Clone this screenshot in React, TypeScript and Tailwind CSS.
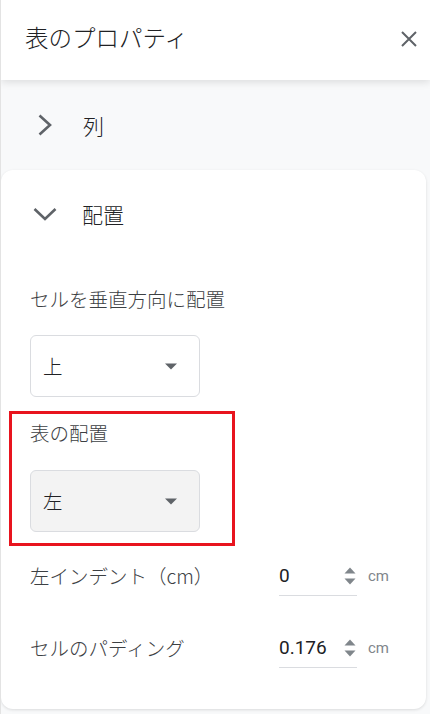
const jp = { fontFamily: '"Noto Sans CJK JP", "Noto Sans", sans-serif' };
const num = { fontFamily: 'Roboto, "Noto Sans CJK JP", sans-serif' };

function Caret() {
  return (
    <svg width="12" height="7" viewBox="0 0 12 7" className="shrink-0">
      <path d="M0 0.5 L12 0.5 L6 6.5 Z" fill="#5f6368" />
    </svg>
  );
}

function Spinner() {
  return (
    <svg width="12" height="18" viewBox="0 0 12 18" className="shrink-0">
      <path d="M0.5 6.5 L6 0.5 L11.5 6.5 Z" fill="#80868b" />
      <path d="M0.5 11.5 L6 17.5 L11.5 11.5 Z" fill="#80868b" />
    </svg>
  );
}

function Select({ value, filled }: { value: string; filled?: boolean }) {
  return (
    <div
      className={`flex items-center justify-between w-[170px] h-[62px] rounded-md border border-[#dadce0] pl-[12px] pr-[22px] ${
        filled ? "bg-[#f3f3f3]" : "bg-white"
      }`}
    >
      <span className="text-[19.5px] leading-[28px] font-light text-[#202124]" style={jp}>
        {value}
      </span>
      <Caret />
    </div>
  );
}

function NumberRow({ label, value, className = "" }: { label: string; value: string; className?: string }) {
  return (
    <div className={`flex items-start ${className}`}>
      <div className="w-[249px] text-[19.5px] leading-[28px] font-light text-[#3c4043]" style={jp}>
        {label}
      </div>
      <div className="flex items-start w-[78px] h-[34px] border-b border-[#dadce0]">
        <span className="flex-1 text-[19px] leading-[28px] text-[#202124]" style={num}>
          {value}
        </span>
        <div className="mt-[5px] mr-[1px]">
          <Spinner />
        </div>
      </div>
      <span className="ml-[11px] text-[15px] leading-[28px] text-[#80868b]" style={num}>
        cm
      </span>
    </div>
  );
}

export default function App() {
  return (
    <div className="w-[430px] h-[714px] overflow-hidden bg-[#f8f9fa] border-l border-[#e3e3e3] flex flex-col">
      <div className="relative z-10 h-[80px] shrink-0 bg-white shadow-[0_2px_8px_rgba(0,0,0,0.12)] flex items-start justify-between pl-[24px] pr-[12px]">
        <h1 className="mt-[21px] text-[23.5px] leading-[32px] font-light text-[#202124]" style={jp}>
          表のプロパティ
        </h1>
        <svg width="18" height="18" viewBox="0 0 18 18" className="mt-[30px]">
          <path d="M2 2 L16 16 M16 2 L2 16" stroke="#5f6368" strokeWidth="2" />
        </svg>
      </div>

      <div className="h-[90px] shrink-0 flex items-center pl-[36px]">
        <svg width="16" height="26" viewBox="0 0 16 26" className="shrink-0">
          <path d="M2.5 3.5 L13 13 L2.5 22.5" fill="none" stroke="#5f6368" strokeWidth="2.6" />
        </svg>
        <span className="ml-[30px] text-[21px] leading-[28px] font-light text-[#202124]" style={jp}>
          列
        </span>
      </div>

      <div className="mr-[4px] bg-white rounded-xl shadow-[0_1px_3px_rgba(0,0,0,0.12)] px-[29px] pb-[41px]">
        <div className="h-[88px] flex items-center ml-[2px]">
          <svg width="26" height="16" viewBox="0 0 26 16" className="shrink-0">
            <path d="M2.5 3 L13 13 L23.5 3" fill="none" stroke="#5f6368" strokeWidth="2.6" />
          </svg>
          <span className="ml-[24px] text-[21px] leading-[28px] font-light text-[#202124]" style={jp}>
            配置
          </span>
        </div>

        <div className="mt-[27px] text-[19.5px] leading-[28px] font-light text-[#3c4043]" style={jp}>
          セルを垂直方向に配置
        </div>
        <div className="mt-[22px]">
          <Select value="上" />
        </div>

        <div className="mt-[14px] -ml-[21px] w-[226px] border-[3px] border-[#e8141e] pl-[18px] pt-[5px] pb-[11px]">
          <div className="text-[19.5px] leading-[28px] font-light text-[#3c4043]" style={jp}>
            表の配置
          </div>
          <div className="mt-[23px]">
            <Select value="左" filled />
          </div>
        </div>

        <NumberRow className="mt-[16px]" label="左インデント（cm）" value="0" />
        <NumberRow className="mt-[38px]" label="セルのパディング" value="0.176" />
      </div>
    </div>
  );
}
